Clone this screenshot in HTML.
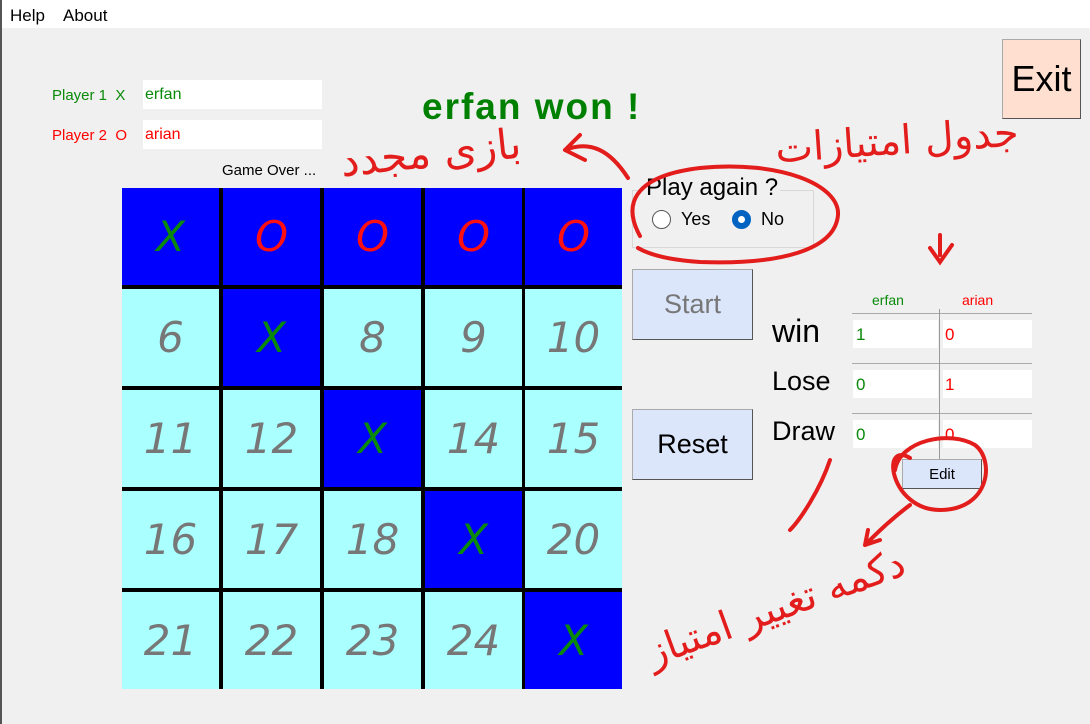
<!DOCTYPE html>
<html><head><meta charset="utf-8"><style>
body{margin:0;width:1090px;height:724px;background:#f0f0f0;font-family:"Liberation Sans","DejaVu Sans",sans-serif;position:relative;overflow:hidden}
.abs{position:absolute}
.menu{left:0;top:0;width:1090px;height:28px;background:#fff}
.grid{left:122px;top:188px;width:500px;height:501px;background:#000}
.c{position:absolute;width:97px;height:97px;display:flex;align-items:center;justify-content:center;font-family:"DejaVu Sans",sans-serif;font-style:italic;font-size:42px;color:#777}
.b{background:#0000ff}.l{background:#aaffff}
.x{color:#0a8a0a}.o{color:#ff1010}
.btn{background:#dbe6fb;border:1px solid #aaa;border-right-color:#555;border-bottom-color:#555;box-sizing:border-box;display:flex;align-items:center;justify-content:center}
.inp{background:#fff}
</style></head><body>
<div class="abs menu"></div>
<div class="abs" style="left:0;top:0;width:2px;height:724px;background:#555"></div>
<div class="abs" style="left:10px;top:6px;font-size:17px">Help</div>
<div class="abs" style="left:63px;top:6px;font-size:17px">About</div>

<div class="abs" style="left:52px;top:87px;font-size:15px;color:#0a8a0a">Player 1&nbsp; X</div>
<div class="abs" style="left:52px;top:127px;font-size:15px;color:#ff0000">Player 2&nbsp; O</div>
<div class="abs inp" style="left:143px;top:80px;width:179px;height:29px"></div>
<div class="abs inp" style="left:143px;top:120px;width:179px;height:29px"></div>
<div class="abs" style="left:145px;top:86px;font-size:16px;color:#0a8a0a">erfan</div>
<div class="abs" style="left:145px;top:126px;font-size:16px;color:#ff0000">arian</div>
<div class="abs" style="left:222px;top:162px;font-size:15px">Game Over ...</div>
<div class="abs" style="left:422px;top:86px;font-size:37px;font-weight:bold;color:#008000;letter-spacing:2px">erfan won !</div>

<div class="abs grid">
<div class="c b x" style="left:0;top:0">X</div><div class="c b o" style="left:101px;top:0">O</div><div class="c b o" style="left:202px;top:0">O</div><div class="c b o" style="left:303px;top:0">O</div><div class="c b o" style="left:403px;top:0">O</div>
<div class="c l" style="left:0;top:101px">6</div><div class="c b x" style="left:101px;top:101px">X</div><div class="c l" style="left:202px;top:101px">8</div><div class="c l" style="left:303px;top:101px">9</div><div class="c l" style="left:403px;top:101px">10</div>
<div class="c l" style="left:0;top:202px">11</div><div class="c l" style="left:101px;top:202px">12</div><div class="c b x" style="left:202px;top:202px">X</div><div class="c l" style="left:303px;top:202px">14</div><div class="c l" style="left:403px;top:202px">15</div>
<div class="c l" style="left:0;top:303px">16</div><div class="c l" style="left:101px;top:303px">17</div><div class="c l" style="left:202px;top:303px">18</div><div class="c b x" style="left:303px;top:303px">X</div><div class="c l" style="left:403px;top:303px">20</div>
<div class="c l" style="left:0;top:404px">21</div><div class="c l" style="left:101px;top:404px">22</div><div class="c l" style="left:202px;top:404px">23</div><div class="c l" style="left:303px;top:404px">24</div><div class="c b x" style="left:403px;top:404px">X</div>
</div>

<div class="abs" style="left:632px;top:190px;width:180px;height:56px;border:1px solid #d8d8d8"></div>
<div class="abs" style="left:644px;top:174px;font-size:24px;background:#f0f0f0;padding:0 2px">Play again ?</div>
<div class="abs" style="left:652px;top:210px;width:17px;height:17px;border:1px solid #555;border-radius:50%;background:#fff"></div>
<div class="abs" style="left:681px;top:209px;font-size:18px">Yes</div>
<div class="abs" style="left:732px;top:210px;width:7px;height:7px;border:6px solid #0063c1;border-radius:50%;background:#fff"></div>
<div class="abs" style="left:761px;top:209px;font-size:18px">No</div>

<div class="abs btn" style="left:632px;top:269px;width:121px;height:71px;font-size:27px;color:#777">Start</div>
<div class="abs btn" style="left:632px;top:409px;width:121px;height:71px;font-size:27px">Reset</div>
<div class="abs btn" style="left:1002px;top:39px;width:79px;height:80px;background:#ffdfcf;font-size:36px">Exit</div>

<div class="abs" style="left:872px;top:292px;font-size:14px;color:#0a8a0a">erfan</div>
<div class="abs" style="left:962px;top:292px;font-size:14px;color:#ff0000">arian</div>
<div class="abs" style="left:852px;top:313px;width:180px;height:1px;background:#aaa"></div>
<div class="abs" style="left:852px;top:363px;width:180px;height:1px;background:#aaa"></div>
<div class="abs" style="left:852px;top:413px;width:180px;height:1px;background:#aaa"></div>
<div class="abs inp" style="left:853px;top:320px;width:85px;height:28px"></div>
<div class="abs inp" style="left:943px;top:320px;width:89px;height:28px"></div>
<div class="abs inp" style="left:853px;top:370px;width:85px;height:28px"></div>
<div class="abs inp" style="left:943px;top:370px;width:89px;height:28px"></div>
<div class="abs inp" style="left:853px;top:420px;width:85px;height:28px"></div>
<div class="abs inp" style="left:943px;top:420px;width:89px;height:28px"></div>
<div class="abs" style="left:939px;top:309px;width:1px;height:150px;background:#999"></div>
<div class="abs" style="left:856px;top:325px;font-size:17px;color:#0a8a0a">1</div>
<div class="abs" style="left:945px;top:325px;font-size:17px;color:#ff0000">0</div>
<div class="abs" style="left:856px;top:375px;font-size:17px;color:#0a8a0a">0</div>
<div class="abs" style="left:945px;top:375px;font-size:17px;color:#ff0000">1</div>
<div class="abs" style="left:856px;top:425px;font-size:17px;color:#0a8a0a">0</div>
<div class="abs" style="left:945px;top:425px;font-size:17px;color:#ff0000">0</div>
<div class="abs" style="left:772px;top:313px;font-size:32px">win</div>
<div class="abs" style="left:772px;top:366px;font-size:27px">Lose</div>
<div class="abs" style="left:772px;top:416px;font-size:27px">Draw</div>
<div class="abs btn" style="left:902px;top:459px;width:80px;height:30px;font-size:15px">Edit</div>

<svg class="abs" style="left:0;top:0" width="1090" height="724" fill="none" stroke="#e31c1c" stroke-width="4" stroke-linecap="round">
<path d="M640 236 C620 200 640 175 700 168 C780 160 840 185 838 215 C835 250 780 265 700 262 C670 260 650 255 638 248"/>
<path d="M628 178 C610 150 590 140 565 150 M565 150 L580 135 M565 150 L585 160"/>
<path d="M830 460 C820 490 800 520 790 530"/>
<path d="M910 458 C880 440 890 510 940 510 C990 510 995 460 975 445 C950 430 900 440 895 470"/>
<path d="M910 505 C890 520 875 535 865 545 M865 545 L880 540 M865 545 L868 530"/>
<path d="M940 235 L940 255 M930 248 L940 262 L952 245"/>
</svg>
<div class="abs" style="left:340px;top:128px;font-size:42px;color:#e31c1c;font-family:'DejaVu Sans',sans-serif;transform:rotate(-6deg)">بازی مجدد</div>
<div class="abs" style="left:775px;top:118px;font-size:40px;color:#e31c1c;font-family:'DejaVu Sans',sans-serif;transform:rotate(-4deg)">جدول امتیازات</div>
<div class="abs" style="left:640px;top:585px;font-size:40px;color:#e31c1c;font-family:'DejaVu Sans',sans-serif;transform:rotate(-20deg)">دکمه تغییر امتیاز</div>
</body></html>
